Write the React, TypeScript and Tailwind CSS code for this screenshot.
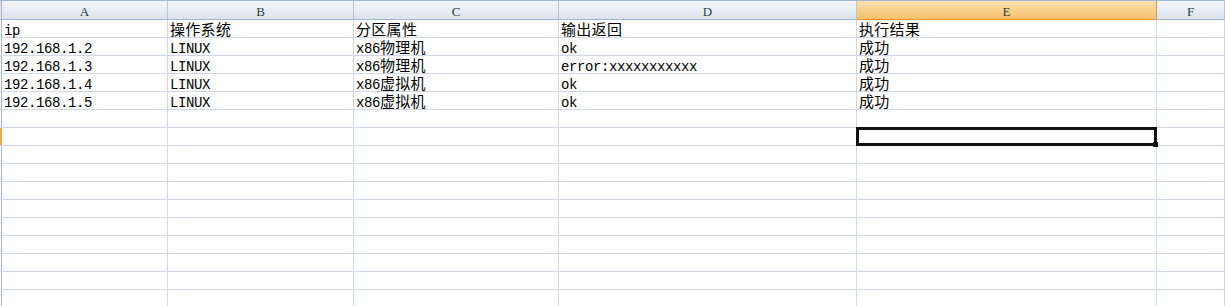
import React from "react";

const widths = [166, 186, 205, 298, 300];
const letters = ["A", "B", "C", "D", "E", "F"];

const data: string[][] = [
  ["ip", "操作系统", "分区属性", "输出返回", "执行结果"],
  ["192.168.1.2", "LINUX", "x86物理机", "ok", "成功"],
  ["192.168.1.3", "LINUX", "x86物理机", "error:xxxxxxxxxxx", "成功"],
  ["192.168.1.4", "LINUX", "x86虚拟机", "ok", "成功"],
  ["192.168.1.5", "LINUX", "x86虚拟机", "ok", "成功"],
];

const TOTAL_ROWS = 16;
const SELECTED_ROW = 6;

function CellText({ text }: { text: string }) {
  const parts = text.split(/([\u4e00-\u9fff]+)/).filter((p) => p.length > 0);
  return (
    <span className="whitespace-nowrap text-black leading-[11px]">
      {parts.map((p, i) =>
        /[\u4e00-\u9fff]/.test(p) ? (
          <span
            key={i}
            className="inline-block font-['Noto_Sans_CJK_SC',sans-serif] text-[15px] leading-[11px] tracking-[0.3px]"
          >
            {p}
          </span>
        ) : (
          <span key={i} className="inline-block leading-[11px]">
            {p}
          </span>
        )
      )}
    </span>
  );
}

export default function App() {
  return (
    <div className="relative w-[1225px] h-[306px] overflow-hidden bg-white">
      {/* column header row */}
      <div className="flex h-[20px] border-t border-b border-[#9eb6ce] bg-gradient-to-b from-[#f4f7fb] to-[#dbe3ee]">
        <div className="w-[2px] shrink-0 border-r border-[#9eb6ce] bg-[#dfe6ef]" />
        {letters.map((l, i) => {
          const active = i === 4;
          const w = widths[i];
          return (
            <div
              key={l}
              style={w ? { width: w } : undefined}
              className={
                (w ? "shrink-0 " : "flex-1 ") +
                (active
                  ? "border-r border-[#f29436] bg-gradient-to-b from-[#fbe1b2] to-[#f4c168] -mb-[1px] border-b "
                  : "border-r border-[#b6c6da] ") +
                "flex items-center justify-center pt-[3px] font-['Liberation_Serif',serif] text-[13px] text-[#27413e]"
              }
            >
              {l}
            </div>
          );
        })}
      </div>

      {/* data rows */}
      {Array.from({ length: TOTAL_ROWS }).map((_, r) => {
        const row = data[r];
        const sel = r === SELECTED_ROW;
        return (
          <div key={r} className="flex h-[18px] border-b border-[#d0d7e5]">
            <div
              className={
                "w-[2px] shrink-0 border-r " +
                (sel ? "bg-[#f4a640] border-[#f4a640]" : "bg-white border-[#9eb6ce]")
              }
            />
            {letters.map((l, c) => {
              const w = widths[c];
              const text = row ? row[c] : undefined;
              return (
                <div
                  key={l}
                  style={w ? { width: w } : undefined}
                  className={
                    (w ? "shrink-0 " : "flex-1 ") +
                    "flex items-end border-r border-[#d0d7e5] pl-[2px] font-['Liberation_Mono',monospace] text-[14px] tracking-[-0.4px] leading-[11px]"
                  }
                >
                  {text ? <CellText text={text} /> : null}
                </div>
              );
            })}
          </div>
        );
      })}

      {/* selection box */}
      <div className="absolute left-[856px] top-[127px] w-[301px] h-[19px] border-[3px] border-[#111111]" />
      <div className="absolute left-[1153px] top-[142px] w-[5px] h-[5px] bg-[#111111]" />
    </div>
  );
}
